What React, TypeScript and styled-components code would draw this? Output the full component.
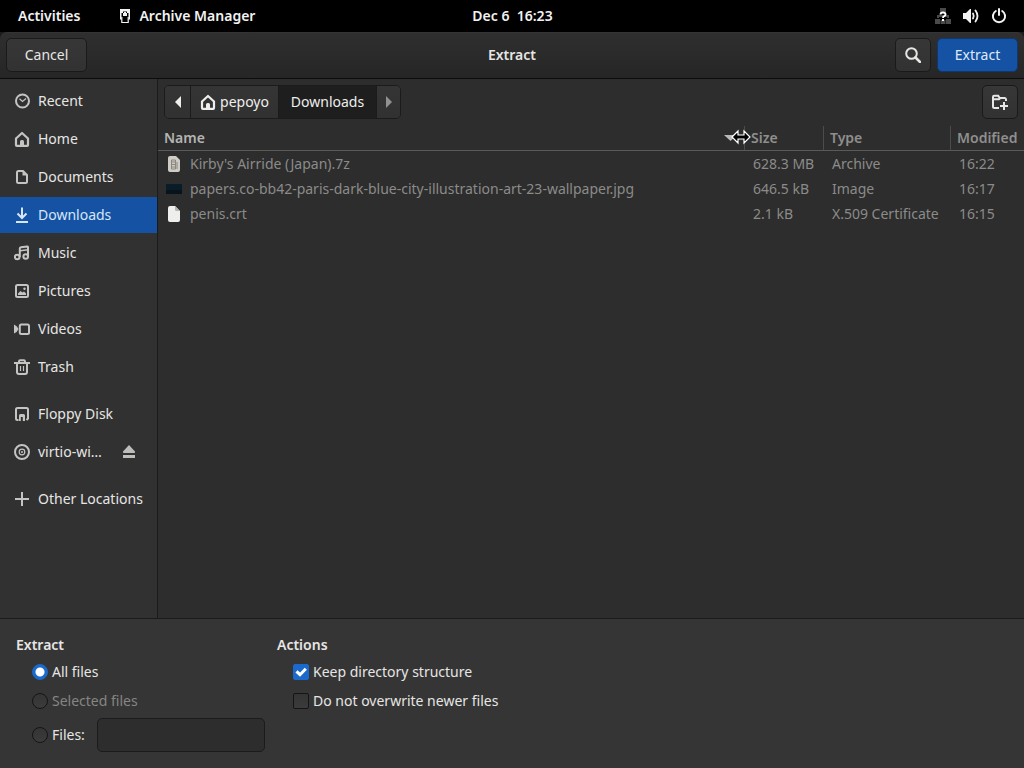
import React from "react";
import styled, { createGlobalStyle } from "styled-components";

const GlobalStyle = createGlobalStyle`
  *, *::before, *::after { box-sizing: border-box; }
  body { margin: 0; background: #2d2d2d; }
  body, button, input { font: 400 14px/20px "Noto Sans", "Open Sans", sans-serif; }
  button { cursor: default; }
`;

const Screen = styled.div`
  display: flex;
  flex-direction: column;
  min-height: 100vh;
  color: #e6e6e4;
`;

const TopBar = styled.header`
  display: grid;
  grid-template-columns: 1fr auto 1fr;
  align-items: center;
  height: 32px;
  padding: 0 17px 0 18px;
  background: #000;
  color: #f2f2f2;
`;

const BarGroup = styled.div<{ $gap: number; $end?: boolean }>`
  display: flex;
  align-items: center;
  gap: ${(p) => p.$gap}px;
  justify-content: ${(p) => (p.$end ? "flex-end" : "flex-start")};
`;

const BarButton = styled.button`
  display: flex;
  align-items: center;
  gap: 6px;
  padding: 0;
  border: 0;
  background: none;
  color: inherit;
  font-weight: 600;
  white-space: pre;
`;

const Dialog = styled.main`
  display: flex;
  flex: 1;
  flex-direction: column;
  background: #1c1c1c;
`;

const HeaderBar = styled.div`
  display: grid;
  grid-template-columns: 1fr auto 1fr;
  align-items: center;
  height: 47px;
  padding: 0 6px;
  border-bottom: 1px solid #0c0c0c;
  border-radius: 8px 8px 0 0;
  background: linear-gradient(#2f2f2f, #262626);
  box-shadow: inset 0 1px #343434;
`;

const Title = styled.h1`
  margin: 0;
  font-size: 14px;
  font-weight: 600;
  line-height: 20px;
`;

const Button = styled.button<{ $primary?: boolean; $icon?: boolean }>`
  display: flex;
  align-items: center;
  justify-content: center;
  width: ${(p) => (p.$icon ? 36 : 81)}px;
  height: 34px;
  padding: 0;
  border: 1px solid ${(p) => (p.$primary ? "#10386f" : "#1a1a1a")};
  border-radius: 5px;
  background: ${(p) => (p.$primary ? "#1552a4" : "linear-gradient(#373737, #323232)")};
  color: ${(p) => (p.$primary ? "#dfeaf8" : "#e6e6e4")};
`;

const Body = styled.div`
  display: flex;
  flex: 1;
`;

const Sidebar = styled.nav`
  flex: 0 0 158px;
  min-width: 0;
  padding: 4px 0;
  border-right: 1px solid #1b1b1b;
  background: #313131;
`;

const PlaceList = styled.ul`
  display: flex;
  flex-direction: column;
  gap: 2px;
  margin: 0 0 11px;
  padding: 0;
  list-style: none;
`;

const PlaceRow = styled.li<{ $active?: boolean; $removable?: boolean }>`
  display: flex;
  align-items: center;
  height: 36px;
  padding: 0 ${(p) => (p.$removable ? 20 : 8)}px 0 14px;
  background: ${(p) => (p.$active ? "#1552a4" : "transparent")};
  color: ${(p) => (p.$active ? "#d6e6f8" : "#e6e6e4")};
`;

const PlaceLink = styled.a`
  display: flex;
  flex: 1;
  align-items: center;
  gap: 8px;
  min-width: 0;
  color: inherit;
  text-decoration: none;
  white-space: nowrap;

  svg { color: #c4c4c2; }
  ${PlaceRow}[aria-current] & svg { color: #d6e6f8; }
`;

const EjectButton = styled.button`
  display: flex;
  padding: 0;
  border: 0;
  background: none;
  color: #bdbdbb;
`;

const Files = styled.section`
  flex: 1;
  min-width: 0;
  background: #2d2d2d;
`;

const PathRow = styled.div`
  display: flex;
  justify-content: space-between;
  padding: 6px 6px 7px;
`;

const PathBar = styled.div`
  display: flex;
  height: 34px;
  border: 1px solid #1b1b1b;
  border-radius: 5px;
  overflow: hidden;
`;

const PathButton = styled.button<{ $width: number; $current?: boolean }>`
  display: flex;
  align-items: center;
  justify-content: center;
  gap: 4px;
  width: ${(p) => p.$width}px;
  padding: 0;
  border: 0;
  background: ${(p) => (p.$current ? "#1e1e1e" : "linear-gradient(#353535, #313131)")};
  color: #eeeeec;

  & + & { border-left: 1px solid #1b1b1b; }
  &:disabled { color: #919190; }
`;

const Table = styled.table`
  width: 100%;
  border-collapse: separate;
  border-spacing: 0;
  table-layout: fixed;
  color: #8b8b89;
`;

const Column = styled.col<{ $width?: number }>`
  width: ${(p) => (p.$width ? p.$width + "px" : "auto")};
`;

const HeadCell = styled.th<{ $sorted?: boolean }>`
  position: relative;
  height: 25px;
  padding: 0 0 0 6px;
  border-bottom: 1px solid #5a5a58;
  color: ${(p) => (p.$sorted ? "#b4b4b2" : "#8f8f8d")};
  font-weight: 600;
  line-height: 24px;
  text-align: left;
  white-space: nowrap;

  &:not(:last-child) { border-right: 1px solid #4c4c4a; }
`;

const HeadContent = styled.div`
  display: flex;
  align-items: center;
  justify-content: space-between;
  padding-right: 6px;
`;

const ResizeCursor = styled.svg`
  position: absolute;
  top: 2px;
  right: -8px;
  z-index: 1;
`;

const Cell = styled.td`
  height: 25px;
  padding: 0 0 0 8px;
  white-space: nowrap;
`;

const FileName = styled.div`
  display: flex;
  align-items: center;
  gap: 8px;
`;

const Options = styled.form`
  display: flex;
  gap: 12px;
  padding: 14px 16px 16px;
  border-top: 1px solid #1b1b1b;
  background: #353535;
`;

const Group = styled.fieldset`
  display: flex;
  flex-direction: column;
  gap: 6px;
  min-width: 249px;
  margin: 0;
  padding: 0 0 0 16px;
  border: 0;
`;

const Legend = styled.legend`
  height: 23px;
  margin: 0 0 4px -16px;
  padding: 0;
  font-weight: 600;
  line-height: 23px;
`;

const OptionLabel = styled.label<{ $dim?: boolean }>`
  display: flex;
  align-items: center;
  gap: 4px;
  height: 23px;
  color: ${(p) => (p.$dim ? "#858583" : "#e6e6e4")};
`;

const Mark = styled.input`
  appearance: none;
  width: 16px;
  height: 16px;
  margin: 0;
  border: 1px solid #151515;
  background: linear-gradient(#343434, #3b3b3b);
`;

const Radio = styled(Mark).attrs({ type: "radio" })`
  border-radius: 50%;

  &:checked {
    border-color: #1b6acb;
    background: radial-gradient(circle, #fff 0 4px, #1b6acb 5px);
  }
`;

const Check = styled(Mark).attrs({ type: "checkbox" })`
  border-radius: 2px;

  &:checked {
    border-color: #1b6acb;
    background: #1b6acb;
  }
`;

const CheckSlot = styled.span`
  display: grid;
  width: 16px;
  height: 16px;

  > * { grid-area: 1 / 1; }
  svg { pointer-events: none; }
`;

const FilesRow = styled.div`
  display: flex;
  align-items: center;
  justify-content: space-between;
  height: 34px;
`;

const PatternInput = styled.input`
  width: 168px;
  height: 34px;
  padding: 0 8px;
  border: 1px solid #1b1b1b;
  border-radius: 5px;
  background: #2d2d2d;
  color: #e6e6e4;
`;

const shapes: Record<string, React.ReactNode> = {
  recent: (
    <g fill="none" stroke="currentColor">
      <circle cx="8.5" cy="8" r="6.5" strokeWidth="2" />
      <path d="M5.5 5.8 8.5 8.5 12 5.5" strokeWidth="1.3" />
    </g>
  ),
  home: (
    <>
      <path d="M2 14V7.500L8 2l6 5.500V14a.8.8 0 0 1-.8.8H2.800A.8.8 0 0 1 2 14z" fill="none" stroke="currentColor" strokeWidth="2.200" strokeLinejoin="round" />
      <path d="M6 15v-4.500Q6 9 7.500 9h1Q10 9 10 10.500V15z" fill="currentColor" />
    </>
  ),
  documents: (
    <>
      <path d="M4.500 2H9l4 4v6.500Q13 14 11.500 14h-7Q3 14 3 12.500v-9Q3 2 4.500 2z" fill="none" stroke="currentColor" strokeWidth="2" />
      <path d="M8.500 2v4.500H13z" fill="currentColor" />
    </>
  ),
  downloads: (
    <g fill="none" stroke="currentColor" strokeWidth="2">
      <path d="M8 .5v10M3.500 6.500 8 11l4.500-4.500M2 15h12" />
    </g>
  ),
  music: (
    <g fill="none" stroke="currentColor" strokeWidth="2">
      <circle cx="3.200" cy="12" r="2.300" />
      <circle cx="11.700" cy="11.500" r="2.300" />
      <path d="M5.800 12V3.500Q5.800 2.500 7 2.300l6-.9q1-.1 1 .9v9.200" strokeLinejoin="round" />
      <path d="M6 5.800 14 4.800" strokeWidth="1.500" />
    </g>
  ),
  pictures: (
    <>
      <rect x="2" y="2" width="12" height="12" rx="1.500" fill="none" stroke="currentColor" strokeWidth="2" />
      <path d="M4 12V10.500L6.500 8l2 1.500L10 8.500l2 2V12z" fill="currentColor" />
      <circle cx="10.500" cy="5.800" r="1.200" fill="currentColor" />
    </>
  ),
  videos: (
    <>
      <rect x="5.800" y="3.500" width="9.200" height="9.500" rx="1.500" fill="none" stroke="currentColor" strokeWidth="2" />
      <path d="M0 3.500Q3.500 5 4.500 8 3.500 11 0 12.500z" fill="currentColor" />
    </>
  ),
  trash: (
    <g fill="none" stroke="currentColor">
      <path d="M0 4h16M5 4V2.500Q5 1.200 6.200 1.200h3.600Q11 1.200 11 2.500V4M3 4.500v8.500q0 2 2 2h6q2 0 2-2V4.500" strokeWidth="2" />
      <path d="M6.500 7v5M9.500 7v5" strokeWidth="1.200" />
    </g>
  ),
  floppy: (
    <>
      <path d="M4.500 14H3.500Q2 14 2 12.500V3.500Q2 2 3.500 2h9Q14 2 14 3.500v9L12.500 14" fill="none" stroke="currentColor" strokeWidth="2" />
      <path d="M5 15V9.500Q5 8 6.500 8h3Q11 8 11 9.500V15H8.800v-4H6.800v4z" fill="currentColor" />
    </>
  ),
  disc: (
    <g fill="none" stroke="currentColor">
      <circle cx="8" cy="8" r="7" strokeWidth="2" />
      <circle cx="8" cy="8" r="2.800" strokeWidth="1.200" />
      <circle cx="8" cy="8" r="1" fill="currentColor" stroke="none" />
    </g>
  ),
  plus: <path d="M8 1v14M1 8h14" stroke="currentColor" strokeWidth="2" />,
  eject: <path d="M8 1 14 7.500Q14.500 9 13 9H3Q1.500 9 2 7.500zM2 11h12v3H2z" fill="currentColor" />,
  search: (
    <g fill="none" stroke="currentColor" strokeWidth="2">
      <circle cx="6.500" cy="6.500" r="5.300" />
      <path d="M10.500 10.500 15 15" strokeWidth="2.500" strokeLinecap="round" />
    </g>
  ),
  newFolder: (
    <g fill="none" stroke="currentColor" strokeWidth="2">
      <path d="M7 14H2.500Q1 14 1 12.500V3Q1 1.800 2.200 1.800h4L7.800 4h5Q14 4 14 5.500V7M1 5.200h6l1.500-1.200" />
      <path d="M12 8v8M8 12h8" />
    </g>
  ),
  left: <path d="M11 2v12L5 8z" fill="currentColor" />,
  right: <path d="M5 2v12L11 8z" fill="currentColor" />,
  app: (
    <>
      <path d="M3 1h10v10.500H3z" fill="currentColor" />
      <path d="M4.500 5H6V3.500h4V5h1.500v5.500h-7z" fill="#000" />
      <path d="M6 5h1V4h2v1h1v3H6z" fill="currentColor" />
      <path d="M4.800 9v5.500h6.400V9" fill="#000" stroke="currentColor" strokeWidth="1.200" />
    </>
  ),
  network: (
    <>
      <path d="M5 0h6v4H5zM2 7h12v3h-2V9H4v1H2zM0 11h5v5H0zM11 11h5v5h-5zM5.500 12h5v4h-5z" fill="#4a4a4a" />
      <path d="M5.500 6.500Q5.500 4.500 8 4.500t2.500 2q0 1-1.300 1.700Q8 8.700 8 10" fill="none" stroke="#fff" strokeWidth="1.900" />
      <path d="M7 11h2v2H7z" fill="#fff" />
    </>
  ),
  volume: (
    <>
      <path d="M0 5h3l4-4h1v14H7l-4-4H0z" fill="currentColor" />
      <g fill="none" stroke="currentColor" strokeWidth="1.800" strokeLinecap="round">
        <path d="M10 5.500q1.500 2.500 0 5" />
        <path d="M12.500 2.500q4 5.500 0 11" />
      </g>
    </>
  ),
  power: (
    <g fill="none" stroke="currentColor" strokeWidth="2" strokeLinecap="round">
      <path d="M4.800 3a6.100 6.100 0 1 0 6.400 0M8 1v6" />
    </g>
  ),
  sort: <path d="M2 5h13L8.500 11z" fill="#b9b9b7" />,
  check: <path d="M3.500 7.300 7 10.700 12.800 4.800" fill="none" stroke="#fff" strokeWidth="3" />,
  archive: (
    <>
      <path d="M2 2Q2 0 4 0h6l4 4v10q0 2-2 2H4q-2 0-2-2z" fill="#cfcbc5" />
      <path d="M5.500 4h4v9h-4zM6 6h3M6 8.500h3M6 11h3M11 6v7" fill="none" stroke="#8a8680" />
    </>
  ),
  image: (
    <>
      <path d="M0 3h16v10H0z" fill="#0a1c27" />
      <path d="M0 9h16v4H0z" fill="#07141c" />
    </>
  ),
  file: (
    <>
      <path d="M2 2Q2 0 4 0h5l5 5v9q0 2-2 2H4q-2 0-2-2z" fill="#eeeeec" />
      <path d="M9 0l5 5H10.500Q9 5 9 3.500z" fill="#b5b5b3" />
    </>
  ),
};

const Icon = ({ name }: { name: string }) => (
  <svg width="16" height="16" viewBox="0 0 16 16" aria-hidden="true">
    {shapes[name]}
  </svg>
);

const placeGroups = [
  [
    { icon: "recent", label: "Recent" },
    { icon: "home", label: "Home" },
    { icon: "documents", label: "Documents" },
    { icon: "downloads", label: "Downloads", active: true },
    { icon: "music", label: "Music" },
    { icon: "pictures", label: "Pictures" },
    { icon: "videos", label: "Videos" },
    { icon: "trash", label: "Trash" },
  ],
  [
    { icon: "floppy", label: "Floppy Disk" },
    { icon: "disc", label: "virtio-wi…", eject: true },
  ],
  [{ icon: "plus", label: "Other Locations" }],
] as { icon: string; label: string; active?: boolean; eject?: boolean }[][];

const files = [
  { icon: "archive", name: "Kirby's Airride (Japan).7z", size: "628.3 MB", type: "Archive", modified: "16:22" },
  { icon: "image", name: "papers.co-bb42-paris-dark-blue-city-illustration-art-23-wallpaper.jpg", size: "646.5 kB", type: "Image", modified: "16:17" },
  { icon: "file", name: "penis.crt", size: "2.1 kB", type: "X.509 Certificate", modified: "16:15" },
];

export default function App() {
  return (
    <Screen>
      <GlobalStyle />
      <TopBar>
        <BarGroup $gap={37}>
          <BarButton>Activities</BarButton>
          <BarButton>
            <Icon name="app" />
            Archive Manager
          </BarButton>
        </BarGroup>
        <BarButton>{"Dec 6  16:23"}</BarButton>
        <BarGroup $gap={12} $end>
          <Icon name="network" />
          <Icon name="volume" />
          <Icon name="power" />
        </BarGroup>
      </TopBar>
      <Dialog>
        <HeaderBar>
          <BarGroup $gap={6}>
            <Button>Cancel</Button>
          </BarGroup>
          <Title>Extract</Title>
          <BarGroup $gap={6} $end>
            <Button $icon aria-label="Search">
              <Icon name="search" />
            </Button>
            <Button $primary>Extract</Button>
          </BarGroup>
        </HeaderBar>
        <Body>
          <Sidebar>
            {placeGroups.map((group, i) => (
              <PlaceList key={i}>
                {group.map((place) => (
                  <PlaceRow
                    key={place.label}
                    $active={place.active}
                    $removable={place.eject}
                    aria-current={place.active}
                  >
                    <PlaceLink href="#">
                      <Icon name={place.icon} />
                      {place.label}
                    </PlaceLink>
                    {place.eject && (
                      <EjectButton aria-label="Eject">
                        <Icon name="eject" />
                      </EjectButton>
                    )}
                  </PlaceRow>
                ))}
              </PlaceList>
            ))}
          </Sidebar>
          <Files>
            <PathRow>
              <PathBar>
                <PathButton $width={25} aria-label="Back">
                  <Icon name="left" />
                </PathButton>
                <PathButton $width={88}>
                  <Icon name="home" />
                  pepoyo
                </PathButton>
                <PathButton $width={98} $current>
                  Downloads
                </PathButton>
                <PathButton $width={24} disabled aria-label="Forward">
                  <Icon name="right" />
                </PathButton>
              </PathBar>
              <Button $icon aria-label="New folder">
                <Icon name="newFolder" />
              </Button>
            </PathRow>
            <Table>
              <colgroup>
                <Column />
                <Column $width={79} />
                <Column $width={127} />
                <Column $width={73} />
              </colgroup>
              <thead>
                <tr>
                  <HeadCell $sorted>
                    <HeadContent>
                      Name
                      <Icon name="sort" />
                    </HeadContent>
                    <ResizeCursor width="22" height="18" viewBox="0 0 22 18" aria-hidden="true">
                      <path d="M2 9 8 3v4h6V3l6 6-6 6v-4H8v4z" fill="#000" stroke="#fff" strokeWidth="1.200" />
                    </ResizeCursor>
                  </HeadCell>
                  <HeadCell>Size</HeadCell>
                  <HeadCell>Type</HeadCell>
                  <HeadCell>Modified</HeadCell>
                </tr>
              </thead>
              <tbody>
                {files.map((file) => (
                  <tr key={file.name}>
                    <Cell>
                      <FileName>
                        <Icon name={file.icon} />
                        {file.name}
                      </FileName>
                    </Cell>
                    <Cell>{file.size}</Cell>
                    <Cell>{file.type}</Cell>
                    <Cell>{file.modified}</Cell>
                  </tr>
                ))}
              </tbody>
            </Table>
          </Files>
        </Body>
        <Options>
          <Group>
            <Legend>Extract</Legend>
            <OptionLabel>
              <Radio name="scope" defaultChecked />
              All files
            </OptionLabel>
            <OptionLabel $dim>
              <Radio name="scope" disabled />
              Selected files
            </OptionLabel>
            <FilesRow>
              <OptionLabel>
                <Radio name="scope" />
                Files:
              </OptionLabel>
              <PatternInput type="text" aria-label="Files" />
            </FilesRow>
          </Group>
          <Group>
            <Legend>Actions</Legend>
            <OptionLabel>
              <CheckSlot>
                <Check defaultChecked />
                <Icon name="check" />
              </CheckSlot>
              Keep directory structure
            </OptionLabel>
            <OptionLabel>
              <Check />
              Do not overwrite newer files
            </OptionLabel>
          </Group>
        </Options>
      </Dialog>
    </Screen>
  );
}
